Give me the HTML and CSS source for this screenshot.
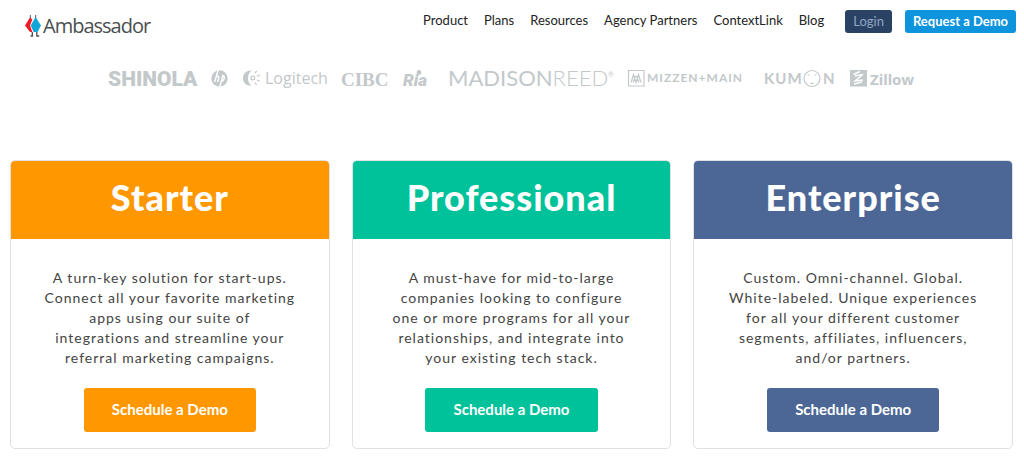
FILE: index.html
```html
<!DOCTYPE html>
<html lang="en">
<head>
  <meta charset="UTF-8">
  <meta name="viewport" content="width=device-width, initial-scale=1.0">
  <title>Ambassador - Plans</title>
  <link rel="stylesheet" href="styles.css">
</head>
<body>
  <header class="site-header">
    <a class="logo" href="#">
      <svg class="logo-mark" width="16" height="22" viewBox="0 0 16 22" aria-hidden="true">
        <path d="M5.4 0v4M10.6 0v4" stroke="#6b7376" stroke-width="1.2"/>
        <path d="M5 2.500L7.400 4.500 5 10.500 7.400 17H5L0 10.500z" fill="#ed1c24"/>
        <path d="M10.600 2L16 10.500 12.500 17H8.700L5.700 10.500z" fill="#12a5d8"/>
        <path d="M7.300 17v4M11.800 17v4M5.600 21h2.600M11.200 21h3" stroke="#4b4f50" stroke-width="1.3"/>
      </svg>
      <span class="logo-text">Ambassador</span>
    </a>
    <nav class="nav">
      <a href="#">Product</a>
      <a href="#">Plans</a>
      <a href="#">Resources</a>
      <a href="#">Agency Partners</a>
      <a href="#">ContextLink</a>
      <a href="#">Blog</a>
    </nav>
    <div class="actions">
      <button class="btn btn-login">Login</button>
      <button class="btn btn-request">Request a Demo</button>
    </div>
  </header>

  <!-- customer logos -->
  <section class="brands">
    <svg class="brand" width="88" height="24" viewBox="0 0 88 24">
      <text class="shinola" x="0" y="19">SHINOLA</text>
    </svg>
    <svg class="brand" width="17" height="24" viewBox="0 0 17 24">
      <circle cx="8.5" cy="11.5" r="8.2"/>
      <path class="cut" d="M7.2 3L3.6 15M4.8 11.2c.6-2.6 3.6-2.8 2.9-.2L6.6 15M12 8.2L8.7 20M11.2 8.5c3.6-.8 2.4 5.6-1.4 6"/>
    </svg>
    <svg class="brand" width="83" height="24" viewBox="0 0 83 24">
      <path d="M8.5 3.5C3 3 0 7 0 11.5S3.5 19 8.5 18.5C5.8 16.5 5 14 5 11.2S5.800 5.600 8.500 3.500z"/>
      <circle class="line" cx="9.800" cy="11" r="1.900"/>
      <path class="line" d="M12 6l1.800-2.200M13.800 9.200l3-1.200M13.800 13l3 1M11.800 15.500l1.800 2.400"/>
      <text class="logitech" x="22" y="17">Logitech</text>
    </svg>
    <svg class="brand" width="47" height="24" viewBox="0 0 47 24">
      <text class="cibc" x="0" y="19">CIBC</text>
    </svg>
    <svg class="brand" width="30" height="24" viewBox="0 0 30 24">
      <text class="ria" x="0" y="19">Ria</text>
      <circle cx="16" cy="5.500" r="2.400"/>
    </svg>
    <svg class="brand" width="165" height="24" viewBox="0 0 165 24">
      <text class="madison" x="0" y="19">MADISON<tspan class="reed">REED</tspan></text>
      <text class="reg" x="160" y="10">®</text>
    </svg>
    <svg class="brand" width="121" height="24" viewBox="0 0 121 24">
      <path class="line" d="M.5 3.500h15.500v15.500H.5zM3 15.500L5.500 7.500 8 15.500 10.500 7.500 13 15.500M5 15.500L7.500 9M8.500 9L11 15.500"/>
      <text class="mizzen" x="19" y="15">MIZZEN+MAIN</text>
    </svg>
    <svg class="brand" width="71" height="24" viewBox="0 0 71 24">
      <text class="kumon" x="0" y="17">KUM</text>
      <circle class="line" cx="48" cy="11.500" r="8"/>
      <path class="line" d="M43.500 8h2M50.500 8h2M46.500 16c1 .8 2 .8 3 0"/>
      <text class="kumon" x="59" y="17">N</text>
    </svg>
    <svg class="brand" width="66" height="24" viewBox="0 0 66 24">
      <path d="M0 3h17v16.500H0z"/>
      <path class="cut" d="M3.500 7.500L10 4.500M5 9l8-1.500L5 14l8-1M4 17l8-2"/>
      <text class="zillow" x="20" y="18">Zillow</text>
    </svg>
  </section>

  <main class="plans">
    <article class="plan starter">
      <h2>Starter</h2>
      <div class="plan-body">
        <p>A turn-key solution for start-ups. Connect all your favorite marketing apps using our suite of<br> integrations and streamline your referral marketing campaigns.</p>
        <button class="btn btn-demo">Schedule a Demo</button>
      </div>
    </article>
    <article class="plan professional">
      <h2>Professional</h2>
      <div class="plan-body">
        <p>A must-have for mid-to-large companies looking to configure<br> one or more programs for all your relationships, and integrate into your existing tech stack.</p>
        <button class="btn btn-demo">Schedule a Demo</button>
      </div>
    </article>
    <article class="plan enterprise">
      <h2>Enterprise</h2>
      <div class="plan-body">
        <p>Custom. Omni-channel. Global. White-labeled. Unique experiences for all your different customer segments, affiliates, influencers, and/or partners.</p>
        <button class="btn btn-demo">Schedule a Demo</button>
      </div>
    </article>
  </main>
</body>
</html>
```

FILE: styles.css
```css
* { box-sizing: border-box; }

body {
  margin: 0;
  background: #fff;
  color: #444;
  font-family: Lato, "Open Sans", sans-serif;
}

/* header */
.site-header {
  display: flex;
  align-items: flex-start;
  padding: 10px 8px 0 25px;
  height: 60px;
}
.logo {
  display: flex;
  align-items: center;
  gap: 2px;
  margin-right: auto;
  padding-top: 4px;
  color: #4b4f50;
  text-decoration: none;
}
.logo-text {
  font-family: "Open Sans", sans-serif;
  font-size: 20px;
  font-weight: 500;
  line-height: 24px;
  letter-spacing: -1px;
}
.nav {
  display: flex;
  gap: 16px;
}
.nav a {
  color: #222;
  font-size: 13px;
  line-height: 21px;
  text-decoration: none;
}
.actions {
  display: flex;
  gap: 13px;
  margin-left: 21px;
}
.btn {
  border: 0;
  border-radius: 3px;
  color: #fff;
  font-family: inherit;
  cursor: pointer;
}
.btn-login,
.btn-request {
  height: 23px;
  padding: 0 8px 2px;
  font-size: 13px;
}
.btn-login { background: #2a4365; color: #93a5c1; }
.btn-request { background: #0e94dc; font-weight: 700; }

/* customer logos */
.brands {
  display: flex;
  justify-content: center;
  gap: 15px;
  padding: 7px 0 69px;
}
.brand {
  flex: none;
  overflow: visible;
  fill: #c3c8cb;
}
.brand .line { fill: none; stroke: #c3c8cb; stroke-width: 1.2; }
.brand .cut { fill: none; stroke: #fff; stroke-width: 1.4; }
.shinola { font: 900 21px Roboto, sans-serif; }
.logitech { font: 16px "Open Sans", sans-serif; }
.cibc { font: 700 19px "Liberation Serif", serif; }
.ria { font: italic 900 17px Roboto, sans-serif; }
.madison { font: 22px Lato, sans-serif; }
.reed { font-weight: 300; }
.reg { font: 7px Lato, sans-serif; }
.mizzen { font: 700 12px Lato, sans-serif; letter-spacing: 1px; }
.kumon { font: 700 15px Lato, sans-serif; letter-spacing: 1px; }
.zillow { font: 700 15px "Noto Sans", sans-serif; }

/* plans */
.plans {
  display: grid;
  grid-template-columns: repeat(3, 1fr);
  gap: 22px;
  padding: 0 11px 16px 10px;
}
.plan {
  overflow: hidden;
  border: 1px solid #dfe1e4;
  border-radius: 5px;
  text-align: center;
}
.plan h2 {
  margin: 0;
  padding: 14px 0 20px;
  color: #fff;
  font-size: 36px;
  line-height: 44px;
  font-weight: 900;
  letter-spacing: 1px;
}
.plan-body { padding: 29px 30px 16px; }
.plan p {
  margin: 0 0 20px;
  font-size: 14px;
  line-height: 20px;
  letter-spacing: 1px;
}
.btn-demo {
  height: 44px;
  padding: 0 28px 2px;
  font-size: 15px;
  font-weight: 700;
}
.starter h2, .starter .btn-demo { background: #ff9800; }
.professional h2, .professional .btn-demo { background: #00c29a; }
.enterprise h2, .enterprise .btn-demo { background: #4c6796; }
```
